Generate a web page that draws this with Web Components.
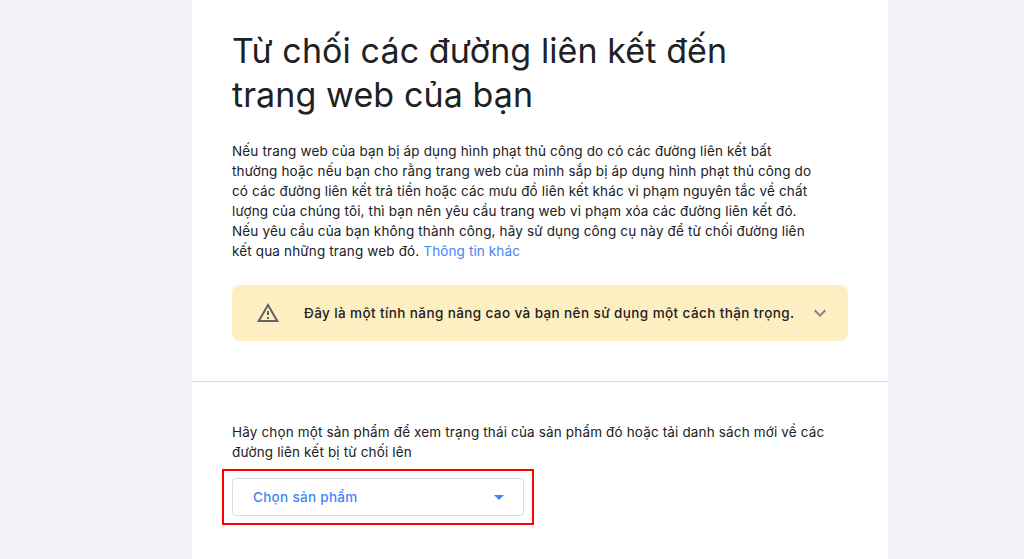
<!DOCTYPE html>
<html lang="vi">
<head>
<meta charset="utf-8">
<title>Từ chối các đường liên kết</title>
<style>
  html, body { margin: 0; height: 100%; overflow: hidden; background: #f1f3f9; }
  body { font-family: Inter, Roboto, "Liberation Sans", sans-serif; color: #202124; }
</style>
</head>
<body>
<disavow-page>
  <disavow-section style="--pad: 29px 40px 40px">
    <page-title>Từ chối các đường liên kết đến<br>trang web của bạn</page-title>
    <intro-text style="margin-top: 24px">
      Nếu trang web của bạn bị áp dụng hình phạt thủ công do có các đường liên kết bất<br>
      thường hoặc nếu bạn cho rằng trang web của mình sắp bị áp dụng hình phạt thủ công do<br>
      có các đường liên kết trả tiền hoặc các mưu đồ liên kết khác vi phạm nguyên tắc về chất<br>
      lượng của chúng tôi, thì bạn nên yêu cầu trang web vi phạm xóa các đường liên kết đó.<br>
      Nếu yêu cầu của bạn không thành công, hãy sử dụng công cụ này để từ chối đường liên<br>
      kết qua những trang web đó. <a href="#">Thông tin khác</a>
    </intro-text>
    <warning-banner>Đây là một tính năng nâng cao và bạn nên sử dụng một cách thận trọng.</warning-banner>
  </disavow-section>
  <disavow-section style="--pad: 40px 40px 40px; --border: 1px solid #dadce0">
    <intro-text>
      Hãy chọn một sản phẩm để xem trạng thái của sản phẩm đó hoặc tải danh sách mới về các<br>
      đường liên kết bị từ chối lên
    </intro-text>
    <product-select>Chọn sản phẩm</product-select>
  </disavow-section>
</disavow-page>

<script>
class DisavowPage extends HTMLElement {
    constructor() {
        super();
        this.attachShadow({ mode: 'open' }).innerHTML = `
            <style>
                :host { display: block; height: 100%; padding-left: 192px; }
                main { width: 696px; background: #fff; height: 100%; }
            </style>
            <main><slot></slot></main>
        `;
    }
}

class DisavowSection extends HTMLElement {
    constructor() {
        super();
        this.attachShadow({ mode: 'open' }).innerHTML = `
            <style>
                :host { display: block; padding: var(--pad); border-top: var(--border, none); }
            </style>
            <slot></slot>
        `;
    }
}

class PageTitle extends HTMLElement {
    constructor() {
        super();
        this.attachShadow({ mode: 'open' }).innerHTML = `
            <style>
                :host { display: block; }
                h1 {
                    margin: 0;
                    font: 400 34px/44px Inter, Roboto, sans-serif;
                    letter-spacing: .1px;
                    color: #202124;
                }
            </style>
            <h1><slot></slot></h1>
        `;
    }
}

class IntroText extends HTMLElement {
    constructor() {
        super();
        this.attachShadow({ mode: 'open' }).innerHTML = `
            <style>
                :host { display: block; font: 400 13.5px/20px Inter, Roboto, sans-serif; color: #202124; letter-spacing: .15px; }
                ::slotted(a) { color: #4285f4; text-decoration: none; letter-spacing: .12px; }
            </style>
            <slot></slot>
        `;
    }
}

class WarningBanner extends HTMLElement {
    constructor() {
        super();
        this.attachShadow({ mode: 'open' }).innerHTML = `
            <style>
                :host {
                    display: flex;
                    align-items: center;
                    height: 56px;
                    margin-top: 24px;
                    background: #feefc3;
                    border-radius: 8px;
                    font: 500 13.5px/20px Inter, Roboto, sans-serif;
                    letter-spacing: .4px;
                    color: #202124;
                }
                .warn { width: 24px; height: 24px; margin-left: 24px; fill: #5f6368; flex: none; }
                .text { margin-left: 24px; flex: 1; white-space: nowrap; }
                .more { width: 24px; height: 24px; margin-right: 16px; fill: #80868b; flex: none; }
            </style>
            <svg class="warn" viewBox="0 0 24 24"><path d="M12 5.99 19.53 19H4.47L12 5.99M12 2 1 21h22L12 2zm1 14h-2v2h2v-2zm0-6h-2v4h2v-4z"/></svg>
            <span class="text"><slot></slot></span>
            <svg class="more" viewBox="0 0 24 24"><path d="M16.59 8.59 12 13.17 7.41 8.59 6 10l6 6 6-6z"/></svg>
        `;
    }
}

class ProductSelect extends HTMLElement {
    constructor() {
        super();
        this.attachShadow({ mode: 'open' }).innerHTML = `
            <style>
                :host { display: block; position: relative; width: 292px; margin-top: 16px; }
                .box {
                    display: flex;
                    align-items: center;
                    justify-content: space-between;
                    box-sizing: border-box;
                    height: 38px;
                    padding: 0 19px 0 20px;
                    border: 1px solid #dadce0;
                    border-radius: 4px;
                    font: 500 13.5px/20px Inter, Roboto, sans-serif;
                    letter-spacing: .3px;
                    color: #4285f4;
                }
                .arrow { width: 0; height: 0; border-left: 5px solid transparent; border-right: 5px solid transparent; border-top: 5px solid #4285f4; }
                .mark { position: absolute; inset: -9px -10px; border: 2px solid #f00; pointer-events: none; }
            </style>
            <div class="box"><span><slot></slot></span><span class="arrow"></span></div>
            <div class="mark"></div>
        `;
    }
}

customElements.define('disavow-page', DisavowPage);
customElements.define('disavow-section', DisavowSection);
customElements.define('page-title', PageTitle);
customElements.define('intro-text', IntroText);
customElements.define('warning-banner', WarningBanner);
customElements.define('product-select', ProductSelect);
</script>
</body>
</html>
